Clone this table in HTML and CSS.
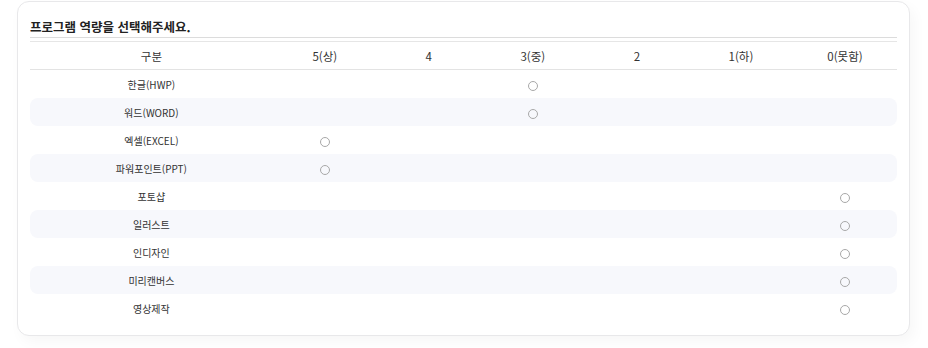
FILE: index.html
```html
<!DOCTYPE html>
<html lang="ko">
<head>
<meta charset="utf-8">
<link rel="stylesheet" href="styles.css">
</head>
<body>
<div class="page">
  <section class="card">
    <h2 class="title">프로그램 역량을 선택해주세요.</h2>
    <table class="skills">
      <colgroup>
        <col class="c-name"><col class="c-lv"><col class="c-lv"><col class="c-lv"><col class="c-lv"><col class="c-lv"><col class="c-lv">
      </colgroup>
      <thead>
        <tr><th>구분</th><th>5(상)</th><th>4</th><th>3(중)</th><th>2</th><th>1(하)</th><th>0(못함)</th></tr>
      </thead>
      <tbody>
        <tr><td>한글(HWP)</td><td></td><td></td><td><span class="radio"></span></td><td></td><td></td><td></td></tr>
        <tr class="alt"><td>워드(WORD)</td><td></td><td></td><td><span class="radio"></span></td><td></td><td></td><td></td></tr>
        <tr><td>엑셀(EXCEL)</td><td><span class="radio"></span></td><td></td><td></td><td></td><td></td><td></td></tr>
        <tr class="alt"><td>파워포인트(PPT)</td><td><span class="radio"></span></td><td></td><td></td><td></td><td></td><td></td></tr>
        <tr><td>포토샵</td><td></td><td></td><td></td><td></td><td></td><td><span class="radio"></span></td></tr>
        <tr class="alt"><td>일러스트</td><td></td><td></td><td></td><td></td><td></td><td><span class="radio"></span></td></tr>
        <tr><td>인디자인</td><td></td><td></td><td></td><td></td><td></td><td><span class="radio"></span></td></tr>
        <tr class="alt"><td>미리캔버스</td><td></td><td></td><td></td><td></td><td></td><td><span class="radio"></span></td></tr>
        <tr><td>영상제작</td><td></td><td></td><td></td><td></td><td></td><td><span class="radio"></span></td></tr>
      </tbody>
    </table>
  </section>
</div>
</body>
</html>
```
FILE: styles.css
```css
html, body {
  margin: 0;
  padding: 0;
  background: #ffffff;
}
body {
  font-family: "Noto Sans CJK KR", "Noto Sans", sans-serif;
  color: #333;
}
.page {
  padding: 1px 18px 14px 17px;
}
.card {
  border: 1px solid #e8e8ea;
  border-radius: 12px;
  padding: 0 12px 13px 12px;
  box-shadow: 4px 6px 14px rgba(0, 0, 0, 0.035);
  background: #fff;
}
.title {
  margin: 0;
  padding-top: 15px;
  font-size: 12.5px;
  line-height: 20px;
  font-weight: 700;
  color: #222;
  border-bottom: 1px solid #dcdcdc;
}
.skills {
  width: 100%;
  margin-top: 3px;
  border-collapse: separate;
  border-spacing: 0;
  table-layout: fixed;
  border-top: 1px solid #e6e6e6;
}
.c-name { width: 28%; }
.c-lv { width: 12%; }
.skills th {
  height: 27px;
  padding: 0;
  font-size: 11.5px;
  font-weight: 400;
  color: #333;
  text-align: center;
  vertical-align: middle;
  border-bottom: 1px solid #e3e3e3;
}
.skills td {
  height: 28px;
  padding: 0;
  font-size: 10px;
  color: #333;
  text-align: center;
  vertical-align: middle;
}
.skills tr.alt td {
  background: #f7f8fc;
}
.skills tr.alt td:first-child {
  border-radius: 8px 0 0 8px;
}
.skills tr.alt td:last-child {
  border-radius: 0 8px 8px 0;
}
.radio {
  display: inline-block;
  width: 8px;
  height: 8px;
  border: 1px solid #a8a8a8;
  border-radius: 50%;
  vertical-align: middle;
  background: transparent;
}
```
